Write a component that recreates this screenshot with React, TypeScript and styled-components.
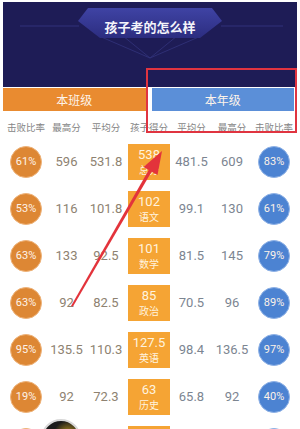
import styled, { createGlobalStyle } from 'styled-components';

const GlobalStyle = createGlobalStyle`
  html, body {
    margin: 0;
    padding: 0;
    overflow: hidden;
    background: #ffffff;
  }
  body {
    font-family: Roboto, "Liberation Sans", "Noto Sans CJK SC", sans-serif;
  }
`;

interface RowData {
  classRate: string;
  classMax: string;
  classAvg: string;
  score: string;
  subject: string;
  gradeAvg: string;
  gradeMax: string;
  gradeRate: string;
}

const rows: RowData[] = [
  { classRate: '61%', classMax: '596', classAvg: '531.8', score: '538', subject: '总分', gradeAvg: '481.5', gradeMax: '609', gradeRate: '83%' },
  { classRate: '53%', classMax: '116', classAvg: '101.8', score: '102', subject: '语文', gradeAvg: '99.1', gradeMax: '130', gradeRate: '61%' },
  { classRate: '63%', classMax: '133', classAvg: '92.5', score: '101', subject: '数学', gradeAvg: '81.5', gradeMax: '145', gradeRate: '79%' },
  { classRate: '63%', classMax: '92', classAvg: '82.5', score: '85', subject: '政治', gradeAvg: '70.5', gradeMax: '96', gradeRate: '89%' },
  { classRate: '95%', classMax: '135.5', classAvg: '110.3', score: '127.5', subject: '英语', gradeAvg: '98.4', gradeMax: '136.5', gradeRate: '97%' },
  { classRate: '19%', classMax: '92', classAvg: '72.3', score: '63', subject: '历史', gradeAvg: '65.8', gradeMax: '92', gradeRate: '40%' },
];

const headings = ['击败比率', '最高分', '平均分', '孩子得分', '平均分', '最高分', '击败比率'];

export default function App() {
  return (
    <Page>
      <GlobalStyle />
      <Header>
        <HeaderDeco width="294" height="85" viewBox="0 0 294 85">
          <line x1="17" y1="24" x2="76" y2="24" stroke="#30317a" strokeWidth="1" />
          <line x1="218" y1="24" x2="280" y2="24" stroke="#30317a" strokeWidth="1" />
          <line x1="96" y1="34" x2="147" y2="56" stroke="#32347c" strokeWidth="0.8" />
          <line x1="120" y1="34" x2="147" y2="56" stroke="#32347c" strokeWidth="0.8" />
          <line x1="174" y1="34" x2="147" y2="56" stroke="#32347c" strokeWidth="0.8" />
          <line x1="198" y1="34" x2="147" y2="56" stroke="#32347c" strokeWidth="0.8" />
        </HeaderDeco>
        <TitleBanner>孩子考的怎么样</TitleBanner>
      </Header>

      <Tabs>
        <Tab tone="orange">本班级</Tab>
        <Tab tone="blue">本年级</Tab>
      </Tabs>

      <HeadRow>
        {headings.map((h, i) => (
          <HeadCell key={i}>{h}</HeadCell>
        ))}
      </HeadRow>

      {rows.map((r, i) => (
        <Row key={i}>
          <Cell>
            <Rate tone="orange">{r.classRate}</Rate>
          </Cell>
          <Cell><Num side="left">{r.classMax}</Num></Cell>
          <Cell><Num side="left">{r.classAvg}</Num></Cell>
          <Cell>
            <ScoreBox>
              <ScoreNum>{r.score}</ScoreNum>
              <ScoreSub>{r.subject}</ScoreSub>
            </ScoreBox>
          </Cell>
          <Cell><Num side="right">{r.gradeAvg}</Num></Cell>
          <Cell><Num side="right">{r.gradeMax}</Num></Cell>
          <Cell>
            <Rate tone="blue">{r.gradeRate}</Rate>
          </Cell>
        </Row>
      ))}

      {/* next row, only its top edge shows above the fold */}
      <Row>
        <Cell><Rate tone="orange" /></Cell>
        <Cell />
        <Cell />
        <Cell><ScoreBox /></Cell>
        <Cell />
        <Cell />
        <Cell><Rate tone="blue" /></Cell>
      </Row>

      <Highlight />
      <Arrow width="300" height="429" viewBox="0 0 300 429">
        <polygon points="71,306 73,306.5 152,171 149,169.5" fill="#e3333b" />
        <polygon points="162,151 157.5,175 143.5,167" fill="#e3333b" />
      </Arrow>
      <Avatar />
    </Page>
  );
}

const Page = styled.div`
  position: relative;
  width: 300px;
  height: 429px;
  overflow: hidden;
  box-sizing: border-box;
  padding: 2px 3px 0;
  background: #ffffff;
`;

const Header = styled.div`
  position: relative;
  height: 85px;
  background: #1e1c56;
  display: flex;
  justify-content: center;
  align-items: flex-start;
`;

const HeaderDeco = styled.svg`
  position: absolute;
  left: 0;
  top: 0;
`;

const TitleBanner = styled.div`
  position: relative;
  margin-top: 6px;
  width: 144px;
  height: 30px;
  box-sizing: border-box;
  padding-top: 8px;
  line-height: 22px;
  text-align: center;
  color: #f4f4fa;
  font-size: 13px;
  font-weight: bold;
  font-family: "Noto Sans CJK SC", sans-serif;
  background: linear-gradient(180deg, #3f43a4 0%, #2c2d80 100%);
  clip-path: polygon(10px 0, 134px 0, 144px 13px, 122px 30px, 22px 30px, 0 13px);
`;

const Tabs = styled.div`
  display: flex;
  gap: 6px;
  padding-right: 3px;
  margin-top: 1px;
`;

const Tab = styled.div<{ tone: 'orange' | 'blue' }>`
  flex: 1;
  height: 23px;
  display: flex;
  align-items: center;
  justify-content: center;
  color: #fdf3ea;
  font-size: 12px;
  font-family: "Noto Sans CJK SC", sans-serif;
  background: ${p => (p.tone === 'orange' ? '#e98b30' : '#5b8fd8')};
`;

const HeadRow = styled.div`
  display: grid;
  grid-template-columns: 46px 35px 44px 42px 43px 38px 46px;
  height: 27px;
  align-items: end;
  padding-bottom: 4px;
  box-sizing: border-box;
`;

const HeadCell = styled.div`
  text-align: center;
  font-size: 9.5px;
  color: #858585;
  white-space: nowrap;
  font-family: "Noto Sans CJK SC", sans-serif;
  line-height: 14px;
`;

const Row = styled.div`
  display: grid;
  grid-template-columns: 46px 35px 44px 42px 43px 38px 46px;
  height: 47px;
  align-items: center;
`;

const Cell = styled.div`
  display: flex;
  justify-content: center;
  align-items: center;
`;

const Rate = styled.div<{ tone: 'orange' | 'blue' }>`
  width: 32px;
  height: 32px;
  border-radius: 50%;
  box-sizing: border-box;
  display: flex;
  align-items: center;
  justify-content: center;
  color: #fdf2e8;
  font-size: 11px;
  background: ${p => (p.tone === 'orange' ? '#dd8734' : '#4c83d2')};
  border: 1px solid ${p => (p.tone === 'orange' ? '#eeb37a' : '#8fb2e6')};
`;

const Num = styled.div<{ side: 'left' | 'right' }>`
  font-size: 13px;
  white-space: nowrap;
  color: ${p => (p.side === 'left' ? '#8e8271' : '#7c8591')};
`;

const ScoreBox = styled.div`
  width: 44px;
  height: 36px;
  background: #f5a434;
  display: flex;
  flex-direction: column;
  align-items: center;
  justify-content: center;
  color: #fff3df;
`;

const ScoreNum = styled.div`
  font-size: 13px;
  line-height: 16px;
`;

const ScoreSub = styled.div`
  font-size: 10px;
  line-height: 14px;
  font-family: "Noto Sans CJK SC", sans-serif;
`;

const Highlight = styled.div`
  position: absolute;
  left: 146px;
  top: 68px;
  width: 151px;
  height: 65px;
  box-sizing: border-box;
  border: 2.5px solid #e03440;
`;

const Arrow = styled.svg`
  position: absolute;
  left: 0;
  top: 0;
  pointer-events: none;
`;

const Avatar = styled.div`
  position: absolute;
  left: 41px;
  top: 419px;
  width: 36px;
  height: 36px;
  border-radius: 50%;
  background: radial-gradient(circle at 70% 40%, #c8a020 0%, #1a1a1a 45%);
  border: 2px solid #d8d8d8;
`;
